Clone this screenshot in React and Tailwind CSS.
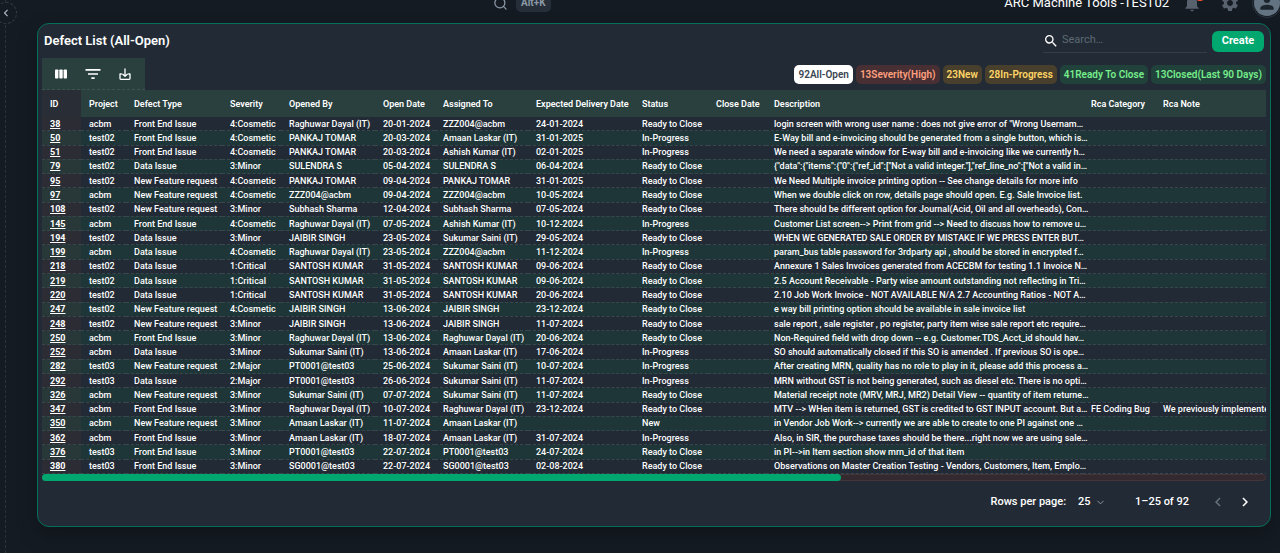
import React, { useState } from "react";
import {
  MdFilterList,
  MdSearch,
  MdChevronLeft,
  MdChevronRight,
  MdNotifications,
  MdSettings,
  MdPerson,
} from "react-icons/md";
import { ChevronDown, Search } from "lucide-react";

const COLUMNS = [
  { label: "ID", width: "w-[39px]" },
  { label: "Project", width: "w-[45px]" },
  { label: "Defect Type", width: "w-[96px]" },
  { label: "Severity", width: "w-[59px]" },
  { label: "Opened By", width: "w-[94px]" },
  { label: "Open Date", width: "w-[60px]" },
  { label: "Assigned To", width: "w-[93px]" },
  { label: "Expected Delivery Date", width: "w-[106px]" },
  { label: "Status", width: "w-[74px]" },
  { label: "Close Date", width: "w-[58px]" },
  { label: "Description", width: "w-[317px]" },
  { label: "Rca Category", width: "w-[72px]" },
  { label: "Rca Note", width: "w-[763px]" },
];

const FRONT = "Front End Issue";
const DATA = "Data Issue";
const FEATURE = "New Feature request";
const READY = "Ready to Close";
const PROGRESS = "In-Progress";

// id, project, type, severity, opened by, open date, assigned to, expected, status, close date, description, rca category, rca note
const DEFECTS = [
  ["38", "acbm", FRONT, "4:Cosmetic", "Raghuwar Dayal (IT)", "20-01-2024", "ZZZ004@acbm", "24-01-2024", READY, "", 'login screen with wrong user name : does not give error of "Wrong Usernam…'],
  ["50", "test02", FRONT, "4:Cosmetic", "PANKAJ TOMAR", "20-03-2024", "Amaan Laskar (IT)", "31-01-2025", PROGRESS, "", "E-Way bill and e-invoicing should be generated from a single button, which is…"],
  ["51", "test02", FRONT, "4:Cosmetic", "PANKAJ TOMAR", "20-03-2024", "Ashish Kumar (IT)", "02-01-2025", PROGRESS, "", "We need a separate window for E-way bill and e-invoicing like we currently h…"],
  ["79", "test02", DATA, "3:Minor", "SULENDRA S", "05-04-2024", "SULENDRA S", "06-04-2024", READY, "", '{"data":{"items":{"0":{"ref_id":["Not a valid integer."],"ref_line_no":["Not a valid in…'],
  ["95", "test02", FEATURE, "4:Cosmetic", "PANKAJ TOMAR", "09-04-2024", "PANKAJ TOMAR", "31-01-2025", READY, "", "We Need Multiple invoice printing option -- See change details for more info"],
  ["97", "acbm", FEATURE, "4:Cosmetic", "ZZZ004@acbm", "09-04-2024", "ZZZ004@acbm", "10-05-2024", READY, "", "When we double click on row, details page should open. E.g. Sale Invoice list."],
  ["108", "test02", FEATURE, "3:Minor", "Subhash Sharma", "12-04-2024", "Subhash Sharma", "07-05-2024", READY, "", "There should be different option for Journal(Acid, Oil and all overheads), Con…"],
  ["145", "acbm", FRONT, "4:Cosmetic", "Raghuwar Dayal (IT)", "07-05-2024", "Ashish Kumar (IT)", "10-12-2024", PROGRESS, "", "Customer List screen--> Print from grid --> Need to discuss how to remove u…"],
  ["194", "test02", DATA, "3:Minor", "JAIBIR SINGH", "23-05-2024", "Sukumar Saini (IT)", "29-05-2024", READY, "", "WHEN WE GENERATED SALE ORDER BY MISTAKE IF WE PRESS ENTER BUT…"],
  ["199", "acbm", DATA, "4:Cosmetic", "Raghuwar Dayal (IT)", "23-05-2024", "ZZZ004@acbm", "11-12-2024", PROGRESS, "", "param_bus table password for 3rdparty api , should be stored in encrypted f…"],
  ["218", "test02", DATA, "1:Critical", "SANTOSH KUMAR", "31-05-2024", "SANTOSH KUMAR", "09-06-2024", READY, "", "Annexure 1 Sales Invoices generated from ACECBM for testing 1.1 Invoice N…"],
  ["219", "test02", DATA, "1:Critical", "SANTOSH KUMAR", "31-05-2024", "SANTOSH KUMAR", "09-06-2024", READY, "", "2.5 Account Receivable - Party wise amount outstanding not reflecting in Tri…"],
  ["220", "test02", DATA, "1:Critical", "SANTOSH KUMAR", "31-05-2024", "SANTOSH KUMAR", "20-06-2024", READY, "", "2.10 Job Work Invoice - NOT AVAILABLE N/A 2.7 Accounting Ratios - NOT A…"],
  ["247", "test02", FEATURE, "4:Cosmetic", "JAIBIR SINGH", "13-06-2024", "JAIBIR SINGH", "23-12-2024", READY, "", "e way bill printing option should be available in sale invoice list"],
  ["248", "test02", FEATURE, "3:Minor", "JAIBIR SINGH", "13-06-2024", "JAIBIR SINGH", "11-07-2024", READY, "", "sale report , sale register , po register, party item wise sale report etc require…"],
  ["250", "acbm", FRONT, "3:Minor", "Raghuwar Dayal (IT)", "13-06-2024", "Raghuwar Dayal (IT)", "20-06-2024", READY, "", "Non-Required field with drop down -- e.g. Customer.TDS_Acct_id should hav…"],
  ["252", "acbm", DATA, "3:Minor", "Sukumar Saini (IT)", "13-06-2024", "Amaan Laskar (IT)", "17-06-2024", PROGRESS, "", "SO should automatically closed if this SO is amended . If previous SO is ope…"],
  ["282", "test03", FEATURE, "2:Major", "PT0001@test03", "25-06-2024", "Sukumar Saini (IT)", "10-07-2024", PROGRESS, "", "After creating MRN, quality has no role to play in it, please add this process a…"],
  ["292", "test03", DATA, "2:Major", "PT0001@test03", "26-06-2024", "Sukumar Saini (IT)", "11-07-2024", PROGRESS, "", "MRN without GST is not being generated, such as diesel etc. There is no opti…"],
  ["326", "acbm", FEATURE, "3:Minor", "Sukumar Saini (IT)", "07-07-2024", "Sukumar Saini (IT)", "11-07-2024", READY, "", "Material receipt note (MRV, MRJ, MR2) Detail View -- quantity of item returne…"],
  ["347", "acbm", FRONT, "3:Minor", "Raghuwar Dayal (IT)", "10-07-2024", "Raghuwar Dayal (IT)", "23-12-2024", READY, "", "MTV --> WHen item is returned, GST is credited to GST INPUT account. But a…", "FE Coding Bug", "We previously implemented"],
  ["350", "acbm", FEATURE, "3:Minor", "Amaan Laskar (IT)", "11-07-2024", "Amaan Laskar (IT)", "", "New", "", "in Vendor Job Work--> currently we are able to create to one PI against one …"],
  ["362", "acbm", FRONT, "3:Minor", "Amaan Laskar (IT)", "18-07-2024", "Amaan Laskar (IT)", "31-07-2024", PROGRESS, "", "Also, in SIR, the purchase taxes should be there...right now we are using sale…"],
  ["376", "test03", FRONT, "3:Minor", "PT0001@test03", "22-07-2024", "PT0001@test03", "24-07-2024", READY, "", "in PI-->in Item section show mrn_id of that item"],
  ["380", "test03", FRONT, "3:Minor", "SG0001@test03", "22-07-2024", "SG0001@test03", "02-08-2024", READY, "", "Observations on Master Creation Testing - Vendors, Customers, Item, Emplo…"],
];

const FILTERS = [
  { count: 92, label: "All-Open", style: "bg-white text-[#3b4652]" },
  { count: 13, label: "Severity(High)", style: "bg-[#472f34] text-[#ffa07e]" },
  { count: 23, label: "New", style: "bg-[#483f2c] text-[#ffd666]" },
  { count: 28, label: "In-Progress", style: "bg-[#483f2c] text-[#ffd666]" },
  { count: 41, label: "Ready To Close", style: "bg-[#21423b] text-[#77ed8b]" },
  { count: 13, label: "Closed(Last 90 Days)", style: "bg-[#21423b] text-[#77ed8b]" },
];

const TopBar = () => (
  <header className="h-[23px] overflow-hidden">
    <div className="-mt-[17px] flex h-10 items-center pl-[487px]">
      <button aria-label="Open search" className="flex items-center gap-2">
        <Search size={15} className="text-[#8b98a5]" />
        <kbd className="rounded-[5px] bg-[#262e39] px-[5px] font-[Roboto] text-[10px] leading-[18px] font-bold text-[#8b98a5]">
          Alt+K
        </kbd>
      </button>
      <div className="ml-auto flex items-center">
        <span className="text-[13px] text-white">
          ARC Machine Tools -TEST02
        </span>
        <button aria-label="Notifications" className="relative ml-[13px]">
          <MdNotifications size={20} className="text-[#58626e]" />
          <span className="absolute -top-[4px] left-3 h-3 w-3 rounded-full bg-[#ff5630]" />
        </button>
        <button aria-label="Settings" className="ml-[18px]">
          <MdSettings size={20} className="text-[#58626e]" />
        </button>
        <button
          aria-label="Account"
          className="ml-[14px] flex h-[26px] w-[26px] items-center justify-center rounded-full bg-[#637381] text-[#1c252e] outline-1 outline-offset-1 outline-[#2b3540]"
        >
          <MdPerson size={20} />
        </button>
      </div>
    </div>
  </header>
);

const Toolbar = () => (
  <div className="flex h-8 w-[103px] items-center gap-[13px] border-b border-dashed border-[#3d5352] bg-[#29403f] px-[10px] text-white">
    <button aria-label="Columns" className="flex w-[18px] justify-center">
      <svg width="18" height="18" viewBox="0 0 18 18" fill="currentColor">
        <rect x="3" y="4.5" width="3.4" height="9" rx="0.8" />
        <rect x="7.3" y="4.5" width="3.4" height="9" rx="0.8" />
        <rect x="11.6" y="4.5" width="3.4" height="9" rx="0.8" />
      </svg>
    </button>
    <button aria-label="Filters">
      <MdFilterList size={20} />
    </button>
    <button aria-label="Export" className="flex w-[18px] justify-center">
      <svg
        width="18"
        height="18"
        viewBox="0 0 18 18"
        fill="none"
        stroke="currentColor"
        strokeWidth="1.3"
        strokeLinecap="round"
        strokeLinejoin="round"
      >
        <path d="M5.3 9H4v4.5q0 .8.8.8h8.4q.8 0 .8-.8V9h-1.3" />
        <path d="M9 4v7.3M6.7 9.2 9 11.4l2.3-2.2" />
      </svg>
    </button>
  </div>
);

const DefectTable = () => (
  <div>
    <div className="overflow-hidden">
      <table className="h-[384px] w-[1876px] table-fixed border-collapse text-left text-[9px] leading-[12px] whitespace-nowrap text-white">
        <thead>
          <tr className="h-[27px] bg-[#29403f]">
            {COLUMNS.map(({ label, width }) => (
              <th
                key={label}
                scope="col"
                className={`${width} pl-2 font-semibold first:bg-[#282d36]`}
              >
                {label}
              </th>
            ))}
          </tr>
        </thead>
        <tbody>
          {DEFECTS.map((defect) => (
            <tr
              key={defect[0]}
              className="border-b border-dashed border-[#37474b] odd:bg-[#212a35] even:bg-[#1e3638]"
            >
              {COLUMNS.map(({ label }, i) => (
                <td
                  key={label}
                  className="pl-2 font-medium first:bg-[#a05030]/8 first:font-bold"
                >
                  {i === 0 ? (
                    <a href={`#${defect[0]}`} className="underline">
                      {defect[0]}
                    </a>
                  ) : (
                    defect[i]
                  )}
                </td>
              ))}
            </tr>
          ))}
        </tbody>
      </table>
    </div>
    <div className="h-[7px] rounded-sm border border-[#453439] bg-[#33292f]">
      <div className="-mt-px -ml-px h-[7px] w-[65.4%] rounded-sm bg-[#00a76f]" />
    </div>
  </div>
);

const Pagination = () => {
  const [rowsPerPage, setRowsPerPage] = useState("25");

  return (
    <div className="flex h-[42px] items-center justify-end pr-3 text-[11px] font-medium text-white">
      <label htmlFor="rowsPerPage">Rows per page:</label>
      <div className="relative ml-3 flex items-center">
        <select
          id="rowsPerPage"
          value={rowsPerPage}
          onChange={(e) => setRowsPerPage(e.target.value)}
          className="w-7 appearance-none bg-transparent"
        >
          <option value="10">10</option>
          <option value="25">25</option>
          <option value="50">50</option>
        </select>
        <ChevronDown
          size={11}
          className="pointer-events-none absolute right-0 text-[#919eab]"
        />
      </div>
      <span className="ml-[29px]">1–25 of 92</span>
      <button aria-label="Previous page" disabled className="ml-5">
        <MdChevronLeft size={18} className="text-[#65717d]" />
      </button>
      <button aria-label="Next page" className="ml-[9px]">
        <MdChevronRight size={18} />
      </button>
    </div>
  );
};

const App = () => {
  const [search, setSearch] = useState("");

  return (
    <div className="flex min-h-screen overflow-hidden bg-[#151b23] font-[Roboto,sans-serif]">
      <aside className="relative w-[6px] shrink-0 border-r border-dashed border-[#2a323c]">
        <button
          aria-label="Collapse menu"
          className="absolute top-[2px] -left-[5px] flex h-[22px] w-[22px] items-center justify-center rounded-full border border-dashed border-[#343c46] bg-[#151b23] text-[#b0bac4]"
        >
          <MdChevronLeft size={14} />
        </button>
      </aside>
      <div className="min-w-0 flex-1">
        <TopBar />
        <main className="mr-[9px] ml-[31px] rounded-xl border border-[#04705a] bg-[#222b35] px-1 pb-[3px] shadow-[0_8px_20px_rgba(0,0,0,0.25)]">
          <div className="flex h-[34px] items-center">
            <h1 className="pl-[2px] text-[13px] font-semibold text-white">
              Defect List (All-Open)
            </h1>
            <label className="ml-auto flex h-6 w-[164px] items-center gap-[3px] border-b border-[#343d48]">
              <MdSearch size={16} className="text-white" />
              <input
                type="text"
                aria-label="Search"
                value={search}
                onChange={(e) => setSearch(e.target.value)}
                placeholder="Search…"
                className="min-w-0 flex-1 bg-transparent text-[11px] text-white outline-none placeholder:text-[#5d6974]"
              />
            </label>
            <button className="mr-[2px] ml-[5px] h-[21px] w-[52px] rounded-md bg-[#00a76f] text-[11px] font-bold text-white">
              Create
            </button>
          </div>
          <div className="flex items-center justify-between">
            <Toolbar />
            <div className="flex gap-[3px]">
              {FILTERS.map(({ count, label, style }) => (
                <button
                  key={label}
                  className={`${style} flex h-[19px] items-center rounded-[5px] px-1 text-[10px] font-semibold`}
                >
                  <span>{count}</span>
                  <span>{label}</span>
                </button>
              ))}
            </div>
          </div>
          <DefectTable />
          <Pagination />
        </main>
      </div>
    </div>
  );
};

export default App;
